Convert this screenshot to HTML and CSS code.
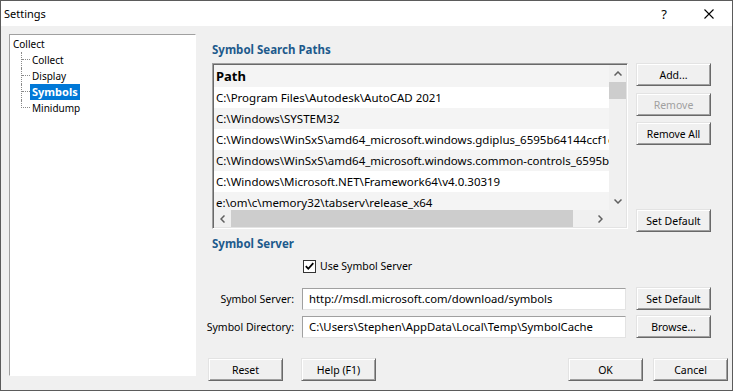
FILE: index.html
```html
<!DOCTYPE html>
<html lang="en">
<head>
    <meta charset="UTF-8">
    <title>Settings</title>
    <link rel="stylesheet" href="styles.css">
</head>
<body>
<div class="window">
    <div class="titlebar">
        <span class="title">Settings</span>
        <span class="help">?</span>
        <svg class="close" width="10" height="10" viewBox="0 0 10 10">
            <path d="M0.5 0.5 L9.5 9.5 M9.5 0.5 L0.5 9.5" stroke="#000" stroke-width="1.1" fill="none"/>
        </svg>
    </div>

    <div class="content">
        <div class="tree">
            <div class="tree-root">Collect</div>
            <ul class="tree-children">
                <li><span class="twig"></span><span class="node">Collect</span></li>
                <li><span class="twig"></span><span class="node">Display</span></li>
                <li><span class="twig"></span><span class="node selected">Symbols</span></li>
                <li><span class="twig"></span><span class="node">Minidump</span></li>
            </ul>
        </div>

        <div class="right">
            <div class="main">
                <h2 class="group-title">Symbol Search Paths</h2>
                <div class="paths-row">
                    <div class="listbox">
                        <div class="list-area">
                            <div class="list-head">Path</div>
                            <div class="list-row">C:\Program Files\Autodesk\AutoCAD 2021</div>
                            <div class="list-row">C:\Windows\SYSTEM32</div>
                            <div class="list-row">C:\Windows\WinSxS\amd64_microsoft.windows.gdiplus_6595b64144ccf1df_1.1.19041.1_none</div>
                            <div class="list-row">C:\Windows\WinSxS\amd64_microsoft.windows.common-controls_6595b64144ccf1df_6.0</div>
                            <div class="list-row">C:\Windows\Microsoft.NET\Framework64\v4.0.30319</div>
                            <div class="list-row">e:\om\c\memory32\tabserv\release_x64</div>
                        </div>
                        <div class="vscroll">
                            <div class="arrow">
                                <svg width="8" height="5" viewBox="0 0 8 5"><polyline points="0.5,4.5 4,1 7.5,4.5" stroke="#606060" stroke-width="1.5" fill="none"/></svg>
                            </div>
                            <div class="vthumb"></div>
                            <div class="track"></div>
                            <div class="arrow">
                                <svg width="8" height="5" viewBox="0 0 8 5"><polyline points="0.5,0.5 4,4 7.5,0.5" stroke="#606060" stroke-width="1.5" fill="none"/></svg>
                            </div>
                        </div>
                        <div class="hscroll">
                            <div class="arrow">
                                <svg width="5" height="8" viewBox="0 0 5 8"><polyline points="4.5,0.5 1,4 4.5,7.5" stroke="#606060" stroke-width="1.5" fill="none"/></svg>
                            </div>
                            <div class="track"><div class="hthumb"></div></div>
                            <div class="arrow">
                                <svg width="5" height="8" viewBox="0 0 5 8"><polyline points="0.5,0.5 4,4 0.5,7.5" stroke="#606060" stroke-width="1.5" fill="none"/></svg>
                            </div>
                        </div>
                        <div class="corner"></div>
                    </div>
                    <div class="side-buttons">
                        <button class="btn">Add...</button>
                        <button class="btn btn-remove" disabled>Remove</button>
                        <button class="btn btn-remove-all">Remove All</button>
                        <button class="btn btn-default">Set Default</button>
                    </div>
                </div>

                <h2 class="group-title server-title">Symbol Server</h2>
                <label class="check-row">
                    <span class="checkbox">
                        <svg width="11" height="11" viewBox="0 0 11 11"><path d="M1.8 5.2 L4.3 7.8 L9.3 2.2" stroke="#000" stroke-width="1.8" fill="none"/></svg>
                    </span>
                    Use Symbol Server
                </label>

                <div class="field-row first">
                    <span class="field-label">Symbol Server:</span>
                    <div class="field">http://msdl.microsoft.com/download/symbols</div>
                    <button class="btn">Set Default</button>
                </div>
                <div class="field-row">
                    <span class="field-label">Symbol Directory:</span>
                    <div class="field">C:\Users\Stephen\AppData\Local\Temp\SymbolCache</div>
                    <button class="btn">Browse...</button>
                </div>
            </div>

            <div class="footer">
                <button class="btn">Reset</button>
                <button class="btn btn-help">Help (F1)</button>
                <span class="spacer"></span>
                <button class="btn">OK</button>
                <button class="btn btn-cancel">Cancel</button>
            </div>
        </div>
    </div>
</div>
</body>
</html>
```

FILE: styles.css
```css
body {
    margin: 0;
    background: #f0f0f0;
}

.window {
    width: 733px;
    height: 391px;
    box-sizing: border-box;
    border: 1px solid #5b5b5b;
    background: #f0f0f0;
    font-family: "Noto Sans", sans-serif;
    font-size: 10.5px;
    color: #000;
    display: flex;
    flex-direction: column;
}

.titlebar {
    height: 25px;
    flex: none;
    background: #fff;
    display: flex;
    align-items: center;
    padding-left: 3px;
}

.title {
    flex: 1;
    font-size: 11px;
}

.help {
    font-size: 13px;
    margin-right: 37px;
}

.close {
    margin-right: 18px;
}

.content {
    flex: 1;
    display: flex;
    padding: 8px 4px 0 8px;
}

/* tree on the left */
.tree {
    width: 187px;
    height: 342px;
    box-sizing: border-box;
    background: #fff;
    border: 1px solid;
    border-color: #a0a0a0 #fff #fff #a0a0a0;
    padding: 1px 0 0 3px;
    font-size: 10px;
}

.tree-root {
    height: 16px;
    line-height: 16px;
}

.tree-children {
    list-style: none;
    margin: 0 0 0 8px;
    padding: 0;
}

.tree-children li {
    display: flex;
    height: 16px;
    border-left: 1px dotted #8a8a8a;
}

.tree-children li:last-child {
    border-left-color: transparent;
}

.twig {
    width: 8px;
    height: 8px;
    flex: none;
    border-bottom: 1px dotted #8a8a8a;
    box-sizing: border-box;
}

.tree-children li:last-child .twig {
    width: 9px;
    margin-left: -1px;
    border-left: 1px dotted #8a8a8a;
}

.node {
    line-height: 16px;
    padding: 0 2px;
}

.node.selected {
    background: #0078d7;
    color: #fff;
    font-weight: bold;
    font-size: 11px;
}

/* right side */
.right {
    flex: 1;
    margin-left: 12px;
    display: flex;
    flex-direction: column;
}

.main {
    padding: 8px 0 0 4px;
}

.group-title {
    margin: 0;
    font-size: 11.5px;
    font-weight: bold;
    line-height: 16px;
    color: #1d5a8c;
}

.paths-row {
    display: flex;
    gap: 8px;
    margin-top: 5px;
}

.listbox {
    width: 416px;
    height: 166px;
    box-sizing: border-box;
    border: 1px solid;
    border-color: #a0a0a0 #fff #fff #a0a0a0;
    box-shadow: inset 1px 1px #696969, inset -1px -1px #e3e3e3;
    padding: 1px;
    background: #fff;
    display: grid;
    grid-template-columns: 395px 17px;
    grid-template-rows: 145px 17px;
    font-size: 11.5px;
}

.list-area {
    overflow: hidden;
    white-space: nowrap;
    background: #fff;
}

.list-head {
    height: 22px;
    line-height: 22px;
    padding-left: 2px;
    font-size: 13px;
    font-weight: bold;
    background: #f4f4f4;
}

.list-row {
    height: 21px;
    line-height: 21px;
    padding-left: 2px;
}

.list-row:nth-child(odd) {
    background: #f4f4f4;
}

.vscroll {
    background: #f0f0f0;
    display: flex;
    flex-direction: column;
}

.hscroll {
    background: #f0f0f0;
    display: flex;
}

.arrow {
    width: 17px;
    height: 17px;
    flex: none;
    display: flex;
    align-items: center;
    justify-content: center;
}

.track {
    flex: 1;
}

.vthumb {
    height: 17px;
    background: #cdcdcd;
}

.hthumb {
    width: 342px;
    height: 17px;
    background: #cdcdcd;
}

.corner {
    background: #f0f0f0;
}

.side-buttons {
    display: flex;
    flex-direction: column;
}

.btn {
    width: 75px;
    height: 23px;
    box-sizing: border-box;
    padding: 0;
    flex: none;
    border: 1px solid;
    border-color: #e3e3e3 #696969 #696969 #e3e3e3;
    box-shadow: inset 1px 1px #fff, inset -1px -1px #a0a0a0;
    background: #f0f0f0;
    font-family: "Noto Sans", sans-serif;
    font-size: 10.5px;
    color: #000;
    white-space: nowrap;
}

.btn:disabled {
    color: #a0a0a0;
}

.btn-remove {
    margin-top: 7px;
}

.btn-remove-all {
    margin-top: 6px;
    font-size: 10.3px;
}

.btn-default {
    margin-top: 64px;
}

.server-title {
    margin-top: 4px;
}

.check-row {
    display: flex;
    align-items: center;
    gap: 4px;
    height: 16px;
    margin: 6px 0 0 91px;
}

.checkbox {
    width: 13px;
    height: 13px;
    box-sizing: border-box;
    border: 1px solid #333;
    background: #fff;
    display: flex;
    align-items: center;
    justify-content: center;
}

.field-row {
    display: flex;
    align-items: center;
    height: 23px;
    margin-top: 5px;
}

.field-row.first {
    margin-top: 13px;
}

.field-label {
    width: 82px;
    flex: none;
    margin-right: 8px;
    display: flex;
    justify-content: flex-end;
    white-space: nowrap;
}

.field {
    width: 324px;
    height: 22px;
    box-sizing: border-box;
    margin-right: 10px;
    padding-left: 6px;
    line-height: 20px;
    font-size: 11.3px;
    background: #fff;
    border: 1px solid;
    border-color: #a0a0a0 #e3e3e3 #e3e3e3 #a0a0a0;
    white-space: nowrap;
    overflow: hidden;
}

.footer {
    display: flex;
    margin-top: 20px;
}

.btn-help {
    margin-left: 18px;
}

.spacer {
    flex: 1;
}

.btn-cancel {
    margin-left: 10px;
}
```
